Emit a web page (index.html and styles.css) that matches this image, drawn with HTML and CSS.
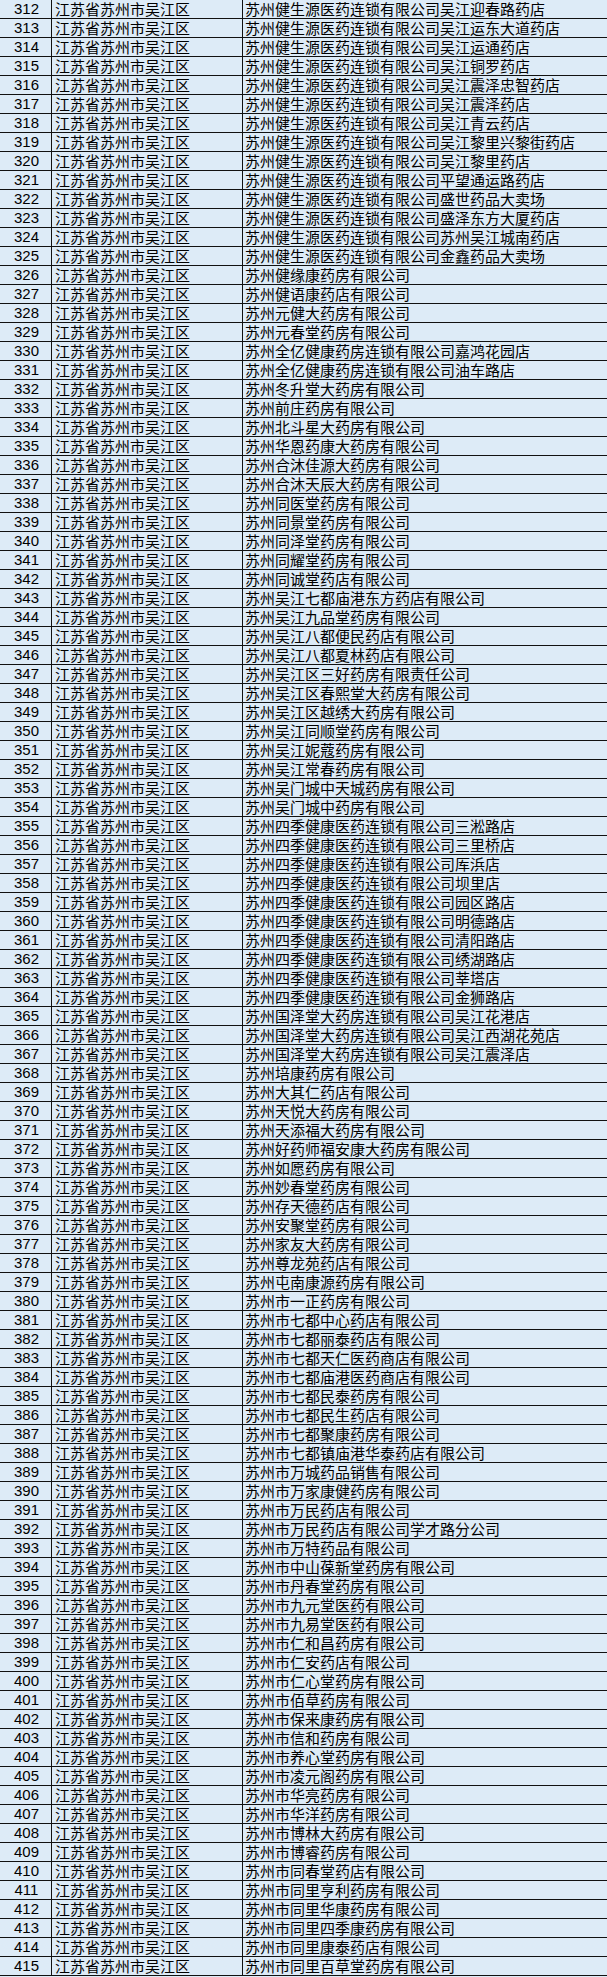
FILE: index.html
```html
<!DOCTYPE html>
<html lang="zh-CN">
<head>
<meta charset="utf-8">
<title>药店列表</title>
<link rel="stylesheet" href="styles.css">
</head>
<body>
<div class="sheet">
<div class="row"><div class="no">312</div><div class="region">江苏省苏州市吴江区</div><div class="name">苏州健生源医药连锁有限公司吴江迎春路药店</div></div>
<div class="row"><div class="no">313</div><div class="region">江苏省苏州市吴江区</div><div class="name">苏州健生源医药连锁有限公司吴江运东大道药店</div></div>
<div class="row"><div class="no">314</div><div class="region">江苏省苏州市吴江区</div><div class="name">苏州健生源医药连锁有限公司吴江运通药店</div></div>
<div class="row"><div class="no">315</div><div class="region">江苏省苏州市吴江区</div><div class="name">苏州健生源医药连锁有限公司吴江铜罗药店</div></div>
<div class="row"><div class="no">316</div><div class="region">江苏省苏州市吴江区</div><div class="name">苏州健生源医药连锁有限公司吴江震泽忠智药店</div></div>
<div class="row"><div class="no">317</div><div class="region">江苏省苏州市吴江区</div><div class="name">苏州健生源医药连锁有限公司吴江震泽药店</div></div>
<div class="row"><div class="no">318</div><div class="region">江苏省苏州市吴江区</div><div class="name">苏州健生源医药连锁有限公司吴江青云药店</div></div>
<div class="row"><div class="no">319</div><div class="region">江苏省苏州市吴江区</div><div class="name">苏州健生源医药连锁有限公司吴江黎里兴黎街药店</div></div>
<div class="row"><div class="no">320</div><div class="region">江苏省苏州市吴江区</div><div class="name">苏州健生源医药连锁有限公司吴江黎里药店</div></div>
<div class="row"><div class="no">321</div><div class="region">江苏省苏州市吴江区</div><div class="name">苏州健生源医药连锁有限公司平望通运路药店</div></div>
<div class="row"><div class="no">322</div><div class="region">江苏省苏州市吴江区</div><div class="name">苏州健生源医药连锁有限公司盛世药品大卖场</div></div>
<div class="row"><div class="no">323</div><div class="region">江苏省苏州市吴江区</div><div class="name">苏州健生源医药连锁有限公司盛泽东方大厦药店</div></div>
<div class="row"><div class="no">324</div><div class="region">江苏省苏州市吴江区</div><div class="name">苏州健生源医药连锁有限公司苏州吴江城南药店</div></div>
<div class="row"><div class="no">325</div><div class="region">江苏省苏州市吴江区</div><div class="name">苏州健生源医药连锁有限公司金鑫药品大卖场</div></div>
<div class="row"><div class="no">326</div><div class="region">江苏省苏州市吴江区</div><div class="name">苏州健缘康药房有限公司</div></div>
<div class="row"><div class="no">327</div><div class="region">江苏省苏州市吴江区</div><div class="name">苏州健语康药店有限公司</div></div>
<div class="row"><div class="no">328</div><div class="region">江苏省苏州市吴江区</div><div class="name">苏州元健大药房有限公司</div></div>
<div class="row"><div class="no">329</div><div class="region">江苏省苏州市吴江区</div><div class="name">苏州元春堂药房有限公司</div></div>
<div class="row"><div class="no">330</div><div class="region">江苏省苏州市吴江区</div><div class="name">苏州全亿健康药房连锁有限公司嘉鸿花园店</div></div>
<div class="row"><div class="no">331</div><div class="region">江苏省苏州市吴江区</div><div class="name">苏州全亿健康药房连锁有限公司油车路店</div></div>
<div class="row"><div class="no">332</div><div class="region">江苏省苏州市吴江区</div><div class="name">苏州冬升堂大药房有限公司</div></div>
<div class="row"><div class="no">333</div><div class="region">江苏省苏州市吴江区</div><div class="name">苏州前庄药房有限公司</div></div>
<div class="row"><div class="no">334</div><div class="region">江苏省苏州市吴江区</div><div class="name">苏州北斗星大药房有限公司</div></div>
<div class="row"><div class="no">335</div><div class="region">江苏省苏州市吴江区</div><div class="name">苏州华恩药康大药房有限公司</div></div>
<div class="row"><div class="no">336</div><div class="region">江苏省苏州市吴江区</div><div class="name">苏州合沐佳源大药房有限公司</div></div>
<div class="row"><div class="no">337</div><div class="region">江苏省苏州市吴江区</div><div class="name">苏州合沐天辰大药房有限公司</div></div>
<div class="row"><div class="no">338</div><div class="region">江苏省苏州市吴江区</div><div class="name">苏州同医堂药房有限公司</div></div>
<div class="row"><div class="no">339</div><div class="region">江苏省苏州市吴江区</div><div class="name">苏州同景堂药房有限公司</div></div>
<div class="row"><div class="no">340</div><div class="region">江苏省苏州市吴江区</div><div class="name">苏州同泽堂药房有限公司</div></div>
<div class="row"><div class="no">341</div><div class="region">江苏省苏州市吴江区</div><div class="name">苏州同耀堂药房有限公司</div></div>
<div class="row"><div class="no">342</div><div class="region">江苏省苏州市吴江区</div><div class="name">苏州同诚堂药店有限公司</div></div>
<div class="row"><div class="no">343</div><div class="region">江苏省苏州市吴江区</div><div class="name">苏州吴江七都庙港东方药店有限公司</div></div>
<div class="row"><div class="no">344</div><div class="region">江苏省苏州市吴江区</div><div class="name">苏州吴江九品堂药房有限公司</div></div>
<div class="row"><div class="no">345</div><div class="region">江苏省苏州市吴江区</div><div class="name">苏州吴江八都便民药店有限公司</div></div>
<div class="row"><div class="no">346</div><div class="region">江苏省苏州市吴江区</div><div class="name">苏州吴江八都夏林药店有限公司</div></div>
<div class="row"><div class="no">347</div><div class="region">江苏省苏州市吴江区</div><div class="name">苏州吴江区三好药房有限责任公司</div></div>
<div class="row"><div class="no">348</div><div class="region">江苏省苏州市吴江区</div><div class="name">苏州吴江区春熙堂大药房有限公司</div></div>
<div class="row"><div class="no">349</div><div class="region">江苏省苏州市吴江区</div><div class="name">苏州吴江区越绣大药房有限公司</div></div>
<div class="row"><div class="no">350</div><div class="region">江苏省苏州市吴江区</div><div class="name">苏州吴江同顺堂药房有限公司</div></div>
<div class="row"><div class="no">351</div><div class="region">江苏省苏州市吴江区</div><div class="name">苏州吴江妮蔻药房有限公司</div></div>
<div class="row"><div class="no">352</div><div class="region">江苏省苏州市吴江区</div><div class="name">苏州吴江常春药房有限公司</div></div>
<div class="row"><div class="no">353</div><div class="region">江苏省苏州市吴江区</div><div class="name">苏州吴门城中天城药房有限公司</div></div>
<div class="row"><div class="no">354</div><div class="region">江苏省苏州市吴江区</div><div class="name">苏州吴门城中药房有限公司</div></div>
<div class="row"><div class="no">355</div><div class="region">江苏省苏州市吴江区</div><div class="name">苏州四季健康医药连锁有限公司三淞路店</div></div>
<div class="row"><div class="no">356</div><div class="region">江苏省苏州市吴江区</div><div class="name">苏州四季健康医药连锁有限公司三里桥店</div></div>
<div class="row"><div class="no">357</div><div class="region">江苏省苏州市吴江区</div><div class="name">苏州四季健康医药连锁有限公司厍浜店</div></div>
<div class="row"><div class="no">358</div><div class="region">江苏省苏州市吴江区</div><div class="name">苏州四季健康医药连锁有限公司坝里店</div></div>
<div class="row"><div class="no">359</div><div class="region">江苏省苏州市吴江区</div><div class="name">苏州四季健康医药连锁有限公司园区路店</div></div>
<div class="row"><div class="no">360</div><div class="region">江苏省苏州市吴江区</div><div class="name">苏州四季健康医药连锁有限公司明德路店</div></div>
<div class="row"><div class="no">361</div><div class="region">江苏省苏州市吴江区</div><div class="name">苏州四季健康医药连锁有限公司清阳路店</div></div>
<div class="row"><div class="no">362</div><div class="region">江苏省苏州市吴江区</div><div class="name">苏州四季健康医药连锁有限公司绣湖路店</div></div>
<div class="row"><div class="no">363</div><div class="region">江苏省苏州市吴江区</div><div class="name">苏州四季健康医药连锁有限公司莘塔店</div></div>
<div class="row"><div class="no">364</div><div class="region">江苏省苏州市吴江区</div><div class="name">苏州四季健康医药连锁有限公司金狮路店</div></div>
<div class="row"><div class="no">365</div><div class="region">江苏省苏州市吴江区</div><div class="name">苏州国泽堂大药房连锁有限公司吴江花港店</div></div>
<div class="row"><div class="no">366</div><div class="region">江苏省苏州市吴江区</div><div class="name">苏州国泽堂大药房连锁有限公司吴江西湖花苑店</div></div>
<div class="row"><div class="no">367</div><div class="region">江苏省苏州市吴江区</div><div class="name">苏州国泽堂大药房连锁有限公司吴江震泽店</div></div>
<div class="row"><div class="no">368</div><div class="region">江苏省苏州市吴江区</div><div class="name">苏州培康药房有限公司</div></div>
<div class="row"><div class="no">369</div><div class="region">江苏省苏州市吴江区</div><div class="name">苏州大其仁药店有限公司</div></div>
<div class="row"><div class="no">370</div><div class="region">江苏省苏州市吴江区</div><div class="name">苏州天悦大药房有限公司</div></div>
<div class="row"><div class="no">371</div><div class="region">江苏省苏州市吴江区</div><div class="name">苏州天添福大药房有限公司</div></div>
<div class="row"><div class="no">372</div><div class="region">江苏省苏州市吴江区</div><div class="name">苏州好药师福安康大药房有限公司</div></div>
<div class="row"><div class="no">373</div><div class="region">江苏省苏州市吴江区</div><div class="name">苏州如愿药房有限公司</div></div>
<div class="row"><div class="no">374</div><div class="region">江苏省苏州市吴江区</div><div class="name">苏州妙春堂药房有限公司</div></div>
<div class="row"><div class="no">375</div><div class="region">江苏省苏州市吴江区</div><div class="name">苏州存天德药店有限公司</div></div>
<div class="row"><div class="no">376</div><div class="region">江苏省苏州市吴江区</div><div class="name">苏州安聚堂药房有限公司</div></div>
<div class="row"><div class="no">377</div><div class="region">江苏省苏州市吴江区</div><div class="name">苏州家友大药房有限公司</div></div>
<div class="row"><div class="no">378</div><div class="region">江苏省苏州市吴江区</div><div class="name">苏州尊龙苑药店有限公司</div></div>
<div class="row"><div class="no">379</div><div class="region">江苏省苏州市吴江区</div><div class="name">苏州屯南康源药房有限公司</div></div>
<div class="row"><div class="no">380</div><div class="region">江苏省苏州市吴江区</div><div class="name">苏州市一正药房有限公司</div></div>
<div class="row"><div class="no">381</div><div class="region">江苏省苏州市吴江区</div><div class="name">苏州市七都中心药店有限公司</div></div>
<div class="row"><div class="no">382</div><div class="region">江苏省苏州市吴江区</div><div class="name">苏州市七都丽泰药店有限公司</div></div>
<div class="row"><div class="no">383</div><div class="region">江苏省苏州市吴江区</div><div class="name">苏州市七都天仁医药商店有限公司</div></div>
<div class="row"><div class="no">384</div><div class="region">江苏省苏州市吴江区</div><div class="name">苏州市七都庙港医药商店有限公司</div></div>
<div class="row"><div class="no">385</div><div class="region">江苏省苏州市吴江区</div><div class="name">苏州市七都民泰药房有限公司</div></div>
<div class="row"><div class="no">386</div><div class="region">江苏省苏州市吴江区</div><div class="name">苏州市七都民生药店有限公司</div></div>
<div class="row"><div class="no">387</div><div class="region">江苏省苏州市吴江区</div><div class="name">苏州市七都聚康药房有限公司</div></div>
<div class="row"><div class="no">388</div><div class="region">江苏省苏州市吴江区</div><div class="name">苏州市七都镇庙港华泰药店有限公司</div></div>
<div class="row"><div class="no">389</div><div class="region">江苏省苏州市吴江区</div><div class="name">苏州市万城药品销售有限公司</div></div>
<div class="row"><div class="no">390</div><div class="region">江苏省苏州市吴江区</div><div class="name">苏州市万家康健药房有限公司</div></div>
<div class="row"><div class="no">391</div><div class="region">江苏省苏州市吴江区</div><div class="name">苏州市万民药店有限公司</div></div>
<div class="row"><div class="no">392</div><div class="region">江苏省苏州市吴江区</div><div class="name">苏州市万民药店有限公司学才路分公司</div></div>
<div class="row"><div class="no">393</div><div class="region">江苏省苏州市吴江区</div><div class="name">苏州市万特药品有限公司</div></div>
<div class="row"><div class="no">394</div><div class="region">江苏省苏州市吴江区</div><div class="name">苏州市中山葆新堂药房有限公司</div></div>
<div class="row"><div class="no">395</div><div class="region">江苏省苏州市吴江区</div><div class="name">苏州市丹春堂药房有限公司</div></div>
<div class="row"><div class="no">396</div><div class="region">江苏省苏州市吴江区</div><div class="name">苏州市九元堂医药有限公司</div></div>
<div class="row"><div class="no">397</div><div class="region">江苏省苏州市吴江区</div><div class="name">苏州市九易堂医药有限公司</div></div>
<div class="row"><div class="no">398</div><div class="region">江苏省苏州市吴江区</div><div class="name">苏州市仁和昌药房有限公司</div></div>
<div class="row"><div class="no">399</div><div class="region">江苏省苏州市吴江区</div><div class="name">苏州市仁安药店有限公司</div></div>
<div class="row"><div class="no">400</div><div class="region">江苏省苏州市吴江区</div><div class="name">苏州市仁心堂药房有限公司</div></div>
<div class="row"><div class="no">401</div><div class="region">江苏省苏州市吴江区</div><div class="name">苏州市佰草药房有限公司</div></div>
<div class="row"><div class="no">402</div><div class="region">江苏省苏州市吴江区</div><div class="name">苏州市保来康药房有限公司</div></div>
<div class="row"><div class="no">403</div><div class="region">江苏省苏州市吴江区</div><div class="name">苏州市信和药房有限公司</div></div>
<div class="row"><div class="no">404</div><div class="region">江苏省苏州市吴江区</div><div class="name">苏州市养心堂药房有限公司</div></div>
<div class="row"><div class="no">405</div><div class="region">江苏省苏州市吴江区</div><div class="name">苏州市凌元阁药房有限公司</div></div>
<div class="row"><div class="no">406</div><div class="region">江苏省苏州市吴江区</div><div class="name">苏州市华亮药房有限公司</div></div>
<div class="row"><div class="no">407</div><div class="region">江苏省苏州市吴江区</div><div class="name">苏州市华洋药房有限公司</div></div>
<div class="row"><div class="no">408</div><div class="region">江苏省苏州市吴江区</div><div class="name">苏州市博林大药房有限公司</div></div>
<div class="row"><div class="no">409</div><div class="region">江苏省苏州市吴江区</div><div class="name">苏州市博睿药房有限公司</div></div>
<div class="row"><div class="no">410</div><div class="region">江苏省苏州市吴江区</div><div class="name">苏州市同春堂药店有限公司</div></div>
<div class="row"><div class="no">411</div><div class="region">江苏省苏州市吴江区</div><div class="name">苏州市同里亨利药房有限公司</div></div>
<div class="row"><div class="no">412</div><div class="region">江苏省苏州市吴江区</div><div class="name">苏州市同里华康药房有限公司</div></div>
<div class="row"><div class="no">413</div><div class="region">江苏省苏州市吴江区</div><div class="name">苏州市同里四季康药房有限公司</div></div>
<div class="row"><div class="no">414</div><div class="region">江苏省苏州市吴江区</div><div class="name">苏州市同里康泰药店有限公司</div></div>
<div class="row"><div class="no">415</div><div class="region">江苏省苏州市吴江区</div><div class="name">苏州市同里百草堂药房有限公司</div></div>
</div>
</body>
</html>
```
FILE: styles.css
```css
html, body {
  margin: 0;
  padding: 0;
  background: #ddebf7;
}
.sheet {
  width: 607px;
  font-family: "Noto Sans CJK SC", "Liberation Sans", sans-serif;
  font-size: 15px;
  color: #000;
}
.row {
  display: flex;
  height: 19px;
  box-sizing: border-box;
  border-bottom: 1px solid #111;
  line-height: 18px;
  white-space: nowrap;
}
.no {
  width: 52px;
  flex: none;
  box-sizing: border-box;
  border-right: 1px solid #111;
  text-align: center;
  font-family: "Liberation Sans", sans-serif;
  font-size: 15px;
  padding-left: 2px;
}
.region {
  width: 191px;
  flex: none;
  box-sizing: border-box;
  border-right: 1px solid #111;
  padding-left: 3px;
}
.name {
  flex: 1;
  padding-left: 2px;
}
```
